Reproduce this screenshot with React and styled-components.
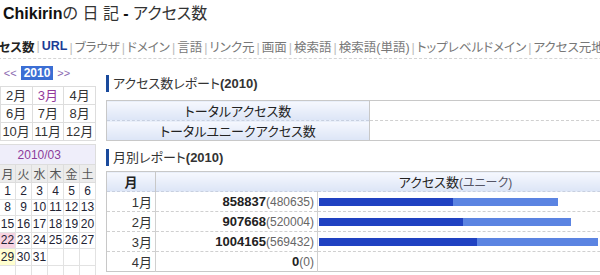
import styled, { createGlobalStyle } from "styled-components";

const GlobalStyle = createGlobalStyle`
  html, body {
    margin: 0;
    padding: 0;
    background: #fff;
    overflow: hidden;
  }
  body {
    font-family: "Liberation Sans", "Noto Sans CJK JP", sans-serif;
    font-feature-settings: "palt";
    color: #333;
  }
`;

const Page = styled.div`
  margin-left: -32px;
  width: 900px;
`;

const Title = styled.h1`
  margin: 0;
  padding-left: 35px;
  height: 28px;
  line-height: 28px;
  font-size: 16px;
  font-weight: normal;
  color: #333;
  white-space: nowrap;

  & b {
    color: #111;
  }
`;

const Nav = styled.ul`
  list-style: none;
  margin: 8px 0 0;
  padding: 0 0 2px 8px;
  display: flex;
  align-items: center;
  height: 20px;
  border-bottom: 1px dashed #d4d4d4;
  font-size: 12.5px;
  white-space: nowrap;
`;

const NavItem = styled.li`
  color: ${(p) => (p.$active ? "#222" : p.$link ? "#1b3c96" : "#777")};
  font-weight: ${(p) => (p.$active || p.$link ? "bold" : "normal")};

  &:not(:first-child)::before {
    content: "|";
    color: #bbb;
    font-weight: normal;
    margin: 0 2px 0 2px;
  }
`;

const Body = styled.div`
  display: flex;
  align-items: flex-start;
`;

const Sidebar = styled.aside`
  width: 128px;
  flex: none;
  display: flex;
  flex-direction: column;
`;

const YearNav = styled.div`
  height: 27px;
  display: flex;
  align-items: center;
  justify-content: center;
  gap: 4px;
  padding-left: 10px;
  font-size: 11px;
  color: #8a68b0;
`;

const Year = styled.span`
  background: #3b6ed4;
  color: #fff;
  font-weight: bold;
  font-size: 12px;
  padding: 1px 3px;
  line-height: 12px;
`;

const MonthGrid = styled.div`
  display: grid;
  grid-template-columns: repeat(4, 1fr);
  border-top: 1px solid #ddd;
  border-left: 1px solid #ddd;
`;

const MonthCell = styled.div`
  height: 17px;
  line-height: 17px;
  text-align: center;
  font-size: 13px;
  color: ${(p) => (p.$current ? "#93399a" : "#333")};
  border-right: 1px solid #ddd;
  border-bottom: 1px solid #ddd;
`;

const Calendar = styled.table`
  margin: 3px 0 0 auto;
  width: 113px;
  border-collapse: collapse;
  table-layout: fixed;
  font-size: 12px;
`;

const CalCaption = styled.th`
  height: 17px;
  background: #efeefa;
  color: #8c3c9a;
  font-weight: normal;
  border: 1px solid #ddd;
  border-left: none;
`;

const WeekDay = styled.th`
  height: 16px;
  padding: 0;
  background: #ececec;
  color: #555;
  font-weight: normal;
  border: 1px solid #ddd;
`;

const Day = styled.td`
  height: 15.5px;
  padding: 0;
  text-align: center;
  color: #223;
  background: ${(p) =>
    p.$holiday ? "#f8d3e1" : p.$today ? "#ffffcf" : "#fff"};
  border: 1px solid #e2e2e2;
`;

const Main = styled.main`
  margin-left: 10px;
  width: 650px;
  flex: none;
`;

const Heading = styled.h2`
  margin: ${(p) => p.$top}px 0 ${(p) => p.$bottom}px;
  height: 17px;
  line-height: 17px;
  padding-left: 4px;
  border-left: 3px solid #1a4a9c;
  font-size: 13px;
  font-weight: normal;
  color: #333;

  & b {
    font-family: "Liberation Sans", sans-serif;
  }
`;

const Table = styled.table`
  width: 100%;
  border-collapse: collapse;
  border: 1px solid #c8c8c8;
  font-size: 13px;
`;

const HeadCell = styled.th`
  height: ${(p) => p.$h || 19}px;
  padding: 0;
  width: ${(p) => p.$w || "auto"};
  background: linear-gradient(#f6f8fe, #dce5f6);
  color: #222;
  font-weight: ${(p) => (p.$bold ? "bold" : "normal")};
  text-align: center;
  border-right: 1px solid #c8c8c8;
  border-bottom: 1px dashed #c8d0e0;
`;

const Unique = styled.span`
  font-size: 12px;
  color: #556;
`;

const Row = styled.tr`
  & td {
    border-bottom: 1px dashed #d0d0d0;
  }
`;

const Cell = styled.td`
  height: 19px;
  padding: 0 ${(p) => p.$pad || 0}px 0 ${(p) => p.$padLeft || 0}px;
  text-align: ${(p) => p.$align || "left"};
  width: ${(p) => p.$w || "auto"};
  border-right: 1px solid #d0d0d0;
  white-space: nowrap;
`;

const Count = styled.b`
  font-family: "Liberation Sans", sans-serif;
  color: #222;
`;

const Sub = styled.span`
  font-size: 12px;
  color: #666;
`;

const Bar = styled.div`
  height: 8px;
  background: #5b84e2;
`;

const BarInner = styled.div`
  height: 100%;
  background: #2042c2;
`;

const navItems = [
  "アクセス数",
  "URL",
  "ブラウザ",
  "ドメイン",
  "言語",
  "リンク元",
  "画面",
  "検索語",
  "検索語(単語)",
  "トップレベルドメイン",
  "アクセス元地域",
  "時間帯",
];

const monthly = [
  { m: "1月", total: 858837, unique: 480635 },
  { m: "2月", total: 907668, unique: 520004 },
  { m: "3月", total: 1004165, unique: 569432 },
  { m: "4月", total: 0, unique: 0 },
];

const weeks = [
  [null, 1, 2, 3, 4, 5, 6],
  [7, 8, 9, 10, 11, 12, 13],
  [14, 15, 16, 17, 18, 19, 20],
  [21, 22, 23, 24, 25, 26, 27],
  [28, 29, 30, 31, null, null, null],
  [null, null, null, null, null, null, null],
];

const MAX_BAR = 279;
const maxTotal = Math.max(...monthly.map((r) => r.total));

export default function App() {
  return (
    <>
      <GlobalStyle />
      <Page>
        <Title>
          <b>Chikirin</b>の 日 記 <b>-</b> アクセス数
        </Title>
        <Nav>
          {navItems.map((item, i) => (
            <NavItem key={item} $active={i === 0} $link={i === 1}>
              {item}
            </NavItem>
          ))}
        </Nav>
        <Body>
          <Sidebar>
            <YearNav>
              <span>&lt;&lt;</span>
              <Year>2010</Year>
              <span>&gt;&gt;</span>
            </YearNav>
            <MonthGrid>
              {Array.from({ length: 12 }, (_, i) => (
                <MonthCell key={i} $current={i === 2}>
                  {i + 1}月
                </MonthCell>
              ))}
            </MonthGrid>
            <Calendar>
              <thead>
                <tr>
                  <CalCaption colSpan={7}>2010/03</CalCaption>
                </tr>
                <tr>
                  {["日", "月", "火", "水", "木", "金", "土"].map((d) => (
                    <WeekDay key={d}>{d}</WeekDay>
                  ))}
                </tr>
              </thead>
              <tbody>
                {weeks.map((w, wi) => (
                  <tr key={wi}>
                    {w.map((d, di) => (
                      <Day key={di} $holiday={d === 22} $today={d === 29}>
                        {d}
                      </Day>
                    ))}
                  </tr>
                ))}
              </tbody>
            </Calendar>
          </Sidebar>
          <Main>
            <Heading $top={16} $bottom={8}>
              アクセス数レポート<b>(2010)</b>
            </Heading>
            <Table>
              <tbody>
                <Row>
                  <HeadCell $w="262px" $h={19}>
                    トータルアクセス数
                  </HeadCell>
                  <Cell />
                </Row>
                <Row>
                  <HeadCell $w="262px" $h={18}>
                    トータルユニークアクセス数
                  </HeadCell>
                  <Cell />
                </Row>
              </tbody>
            </Table>
            <Heading $top={8} $bottom={5}>
              月別レポート<b>(2010)</b>
            </Heading>
            <Table>
              <thead>
                <tr>
                  <HeadCell $w="48px" $bold>
                    月
                  </HeadCell>
                  <HeadCell colSpan={2}>
                    アクセス数<Unique>(ユニーク)</Unique>
                  </HeadCell>
                </tr>
              </thead>
              <tbody>
                {monthly.map((r) => (
                  <Row key={r.m}>
                    <Cell $align="right" $pad={3}>
                      {r.m}
                    </Cell>
                    <Cell $align="right" $pad={3} $w="158px">
                      <Count>{r.total}</Count>
                      <Sub>({r.unique})</Sub>
                    </Cell>
                    <Cell $padLeft={1}>
                      {r.total > 0 && (
                        <Bar
                          style={{ width: (r.total / maxTotal) * MAX_BAR }}
                        >
                          <BarInner
                            style={{
                              width: `${(r.unique / r.total) * 100}%`,
                            }}
                          />
                        </Bar>
                      )}
                    </Cell>
                  </Row>
                ))}
              </tbody>
            </Table>
          </Main>
        </Body>
      </Page>
    </>
  );
}
